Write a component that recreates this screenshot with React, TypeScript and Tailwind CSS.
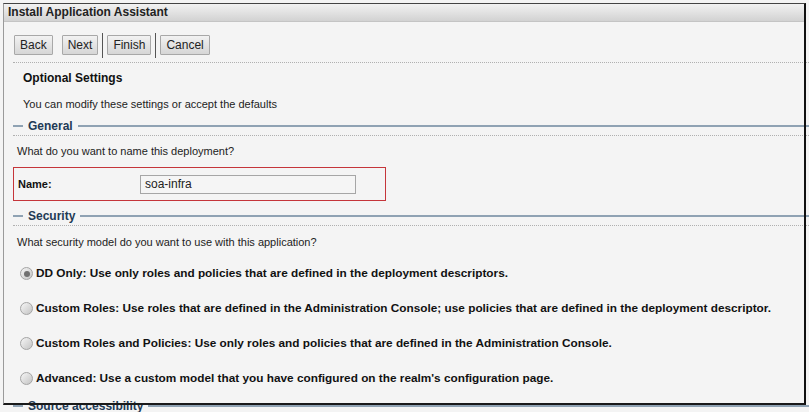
import React from "react";

const font = { fontFamily: '"Liberation Sans", Arial, sans-serif' };

const Btn = ({ label }: { label: string }) => (
  <button className="h-[20px] px-[5px] text-[12px] leading-none text-[#222] border border-[#a8a8a8] bg-gradient-to-b from-[#f2f2f2] to-[#d6d6d6] rounded-[1px]">
    {label}
  </button>
);

const Sep = () => <div className="w-px h-[25px] bg-[#555] mx-[4px]" />;

const Legend = ({ title }: { title: string }) => (
  <div className="flex flex-col">
    <div className="flex items-center h-[18px] pl-[13px]">
      <div className="w-[10px] h-[2px] bg-[#8fa2b3]" />
      <span className="px-[5px] text-[12px] font-bold text-[#223a55]">{title}</span>
      <div className="flex-1 h-[2px] bg-[#8fa2b3] mr-[-4px]" />
    </div>
    <div className="ml-[13px] border-t border-dotted border-[#b0b0b0]" />
  </div>
);

const Radio = ({ checked, label }: { checked?: boolean; label: string }) => (
  <div className="flex items-center h-[35px] pl-[20px]">
    <div className="w-[13px] h-[13px] rounded-full border border-[#a4a4a4] bg-gradient-to-br from-[#f6f6f6] to-[#c4c4c4] flex items-center justify-center">
      {checked && <div className="w-[6px] h-[6px] rounded-full bg-[#707070]" />}
    </div>
    <span className="ml-[3px] text-[11.8px] font-bold text-[#111]">{label}</span>
  </div>
);

export default function App() {
  return (
    <div className="w-[809px] h-[412px] overflow-hidden bg-[#f4f4f4] relative" style={font}>
      <div className="pt-[3px] pl-[4px] pr-[4px]">
        <div className="h-[19px] flex items-center pl-[4px] bg-gradient-to-b from-[#f4f4f4] to-[#d2d2d2] border-b border-[#c4c4c4]">
          <span className="text-[12px] font-bold text-[#222]">Install Application Assistant</span>
        </div>
      </div>

      <div className="flex items-center h-[28px] pl-[14px] mt-[9px]">
        <Btn label="Back" />
        <div className="w-[9px]" />
        <Btn label="Next" />
        <Sep />
        <Btn label="Finish" />
        <Sep />
        <Btn label="Cancel" />
      </div>

      <div className="ml-[13px] border-t border-dotted border-[#b0b0b0] mt-[3px]" />

      <div className="pl-[23px] h-[28px] mt-[1px] flex items-center text-[12px] font-bold text-[#111]">
        Optional Settings
      </div>
      <div className="pl-[23px] h-[25px] flex items-center text-[11px] text-[#222]">
        You can modify these settings or accept the defaults
      </div>

      <Legend title="General" />

      <div className="pl-[17px] h-[30px] flex items-center text-[11px] text-[#222]">
        What do you want to name this deployment?
      </div>

      <div className="ml-[13px] mt-[1px] w-[373px] h-[34px] border border-[#c5353a] flex items-center">
        <span className="pl-[4px] w-[126px] text-[11px] font-bold text-[#111]">Name:</span>
        <div className="w-[216px] h-[19px] border border-[#a6a6a6] bg-[#f5f5f5] flex items-center pl-[4px] text-[12px] text-[#222]">
          soa-infra
        </div>
      </div>

      <div className="h-[6px]" />
      <Legend title="Security" />

      <div className="pl-[17px] h-[33px] flex items-center text-[11px] text-[#222]">
        What security model do you want to use with this application?
      </div>

      <div className="mt-[-3px]">
        <Radio checked label="DD Only: Use only roles and policies that are defined in the deployment descriptors." />
        <Radio label="Custom Roles: Use roles that are defined in the Administration Console; use policies that are defined in the deployment descriptor." />
        <Radio label="Custom Roles and Policies: Use only roles and policies that are defined in the Administration Console." />
        <Radio label="Advanced: Use a custom model that you have configured on the realm's configuration page." />
      </div>

      <div className="mt-[1px]">
        <Legend title="Source accessibility" />
      </div>

      <div className="absolute left-[3px] top-[3px] w-[803px] h-[402px] border-l border-l-[#9a9a9a] border-t border-t-[#444] border-r-2 border-r-[#111] border-b-2 border-b-[#1a1a1a] pointer-events-none" />
    </div>
  );
}
